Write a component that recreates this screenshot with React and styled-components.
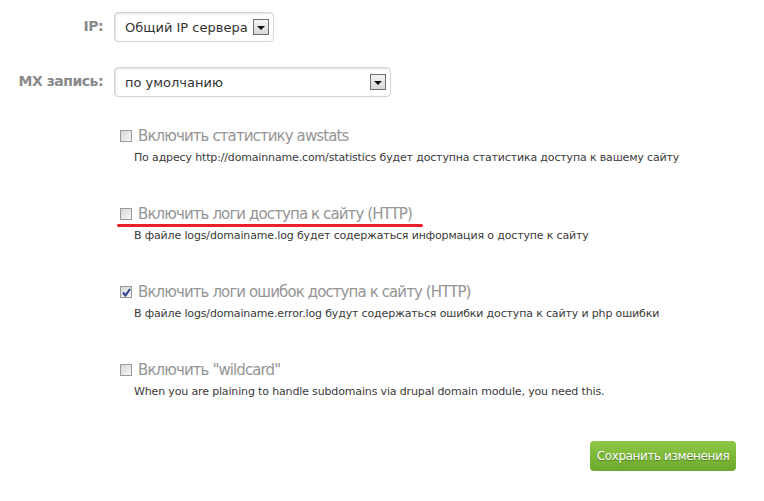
import styled, { createGlobalStyle } from "styled-components";

const GlobalStyle = createGlobalStyle`
  body {
    margin: 0;
    background: #fff;
    font-family: "DejaVu Sans", Verdana, sans-serif;
  }
`;

const Page = styled.div`
  width: 764px;
  height: 501px;
  box-sizing: border-box;
  padding-top: 12px;
  position: relative;
`;

const FieldRow = styled.div`
  display: grid;
  grid-template-columns: 103px auto;
  column-gap: 11px;
  align-items: center;
  margin-bottom: ${(p) => p.$gap || 0}px;
`;

const FieldLabel = styled.label`
  text-align: right;
  font-family: "DejaVu Sans", sans-serif;
  font-weight: bold;
  font-size: 14px;
  letter-spacing: -0.5px;
  color: #8a8a8a;
  margin-top: -2px;
`;

const SelectBox = styled.div`
  width: ${(p) => p.$width}px;
  height: 30px;
  box-sizing: border-box;
  display: flex;
  align-items: center;
  justify-content: space-between;
  padding: 0 4px 0 10px;
  border: 1px solid #d4d4d4;
  border-radius: 4px;
  box-shadow: inset 1px 1px 2px rgba(0, 0, 0, 0.12);
  font-size: 13px;
  color: #333;
`;

const ArrowButton = styled.span`
  width: 16px;
  height: 16px;
  box-sizing: border-box;
  border: 1px solid #707070;
  background: linear-gradient(#f4f4f4, #d8d8d8);
  display: flex;
  align-items: center;
  justify-content: center;

  &::after {
    content: "";
    border-left: 4px solid transparent;
    border-right: 4px solid transparent;
    border-top: 4px solid #111;
    margin-top: 1px;
  }
`;

const Options = styled.div`
  display: flex;
  flex-direction: column;
  gap: 38px;
  padding-left: 120px;
  margin-top: 29px;
`;

const Option = styled.div`
  display: flex;
  flex-direction: column;
  position: relative;
`;

const OptionHead = styled.div`
  display: flex;
  align-items: center;
  gap: 6px;
  height: 20px;
`;

const Box = styled.span`
  width: 12px;
  height: 12px;
  box-sizing: border-box;
  border: 1px solid #9a9a9a;
  background: linear-gradient(135deg, #d6d6d6, #f7f7f7);
  display: flex;
  align-items: center;
  justify-content: center;
`;

const OptionLabel = styled.span`
  font-size: 15px;
  letter-spacing: -0.9px;
  color: #959595;
`;

const Hint = styled.div`
  margin-top: 4px;
  margin-left: 14px;
  line-height: 16px;
  font-size: 11px;
  letter-spacing: -0.15px;
  color: #3a3a3a;
`;

const Underline = styled.div`
  position: absolute;
  left: -3px;
  top: 20px;
  width: 306px;
  height: 3px;
  border-radius: 2px;
  background: #e8212a;
`;

const Footer = styled.div`
  display: flex;
  justify-content: flex-end;
  padding-right: 28px;
  margin-top: 41px;
`;

const SaveButton = styled.button`
  width: 146px;
  height: 30px;
  border: none;
  border-radius: 4px;
  background: linear-gradient(#8fc846, #6ca92c);
  color: #fff;
  font-family: "DejaVu Sans", sans-serif;
  font-size: 12px;
  letter-spacing: -0.4px;
  text-shadow: 0 1px 1px rgba(40, 80, 10, 0.6);
  cursor: pointer;
`;

const Check = () => (
  <svg width="9" height="9" viewBox="0 0 9 9">
    <path d="M1 4.5 L3.5 7.5 L8 1" fill="none" stroke="#2a3f9a" strokeWidth="2" />
  </svg>
);

const options = [
  {
    label: "Включить статистику awstats",
    hint: "По адресу http://domainname.com/statistics будет доступна статистика доступа к вашему сайту",
  },
  {
    label: "Включить логи доступа к сайту (HTTP)",
    hint: "В файле logs/domainame.log будет содержаться информация о доступе к сайту",
    marked: true,
  },
  {
    label: "Включить логи ошибок доступа к сайту (HTTP)",
    hint: "В файле logs/domainame.error.log будут содержаться ошибки доступа к сайту и php ошибки",
    checked: true,
  },
  {
    label: 'Включить "wildcard"',
    hint: "When you are plaining to handle subdomains via drupal domain module, you need this.",
  },
];

export default function App() {
  return (
    <>
      <GlobalStyle />
      <Page>
        <FieldRow $gap={25}>
          <FieldLabel>IP:</FieldLabel>
          <SelectBox $width={160}>
            Общий IP сервера
            <ArrowButton />
          </SelectBox>
        </FieldRow>
        <FieldRow>
          <FieldLabel>MX запись:</FieldLabel>
          <SelectBox $width={277}>
            по умолчанию
            <ArrowButton />
          </SelectBox>
        </FieldRow>

        <Options>
          {options.map((o) => (
            <Option key={o.label}>
              <OptionHead>
                <Box>{o.checked && <Check />}</Box>
                <OptionLabel>{o.label}</OptionLabel>
              </OptionHead>
              <Hint>{o.hint}</Hint>
              {o.marked && <Underline />}
            </Option>
          ))}
        </Options>

        <Footer>
          <SaveButton>Сохранить изменения</SaveButton>
        </Footer>
      </Page>
    </>
  );
}
